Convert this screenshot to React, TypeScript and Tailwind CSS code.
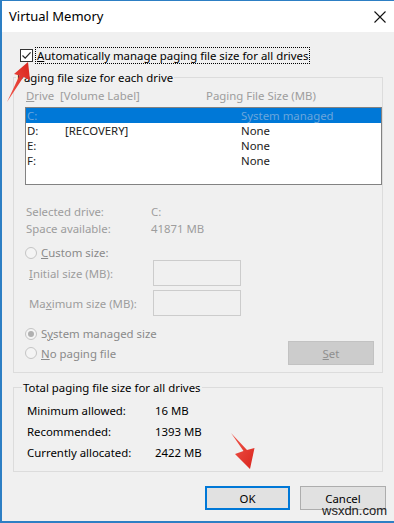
import React from 'react';

const disabled = 'text-[#9d9d9d]';

const Radio: React.FC<{ checked?: boolean }> = ({ checked }) => (
  <span className="w-[12px] h-[12px] rounded-full border border-[#c4c4c4] bg-[#f4f4f4] flex items-center justify-center shrink-0">
    {checked && <span className="w-[6px] h-[6px] rounded-full bg-[#b0b0b0]" />}
  </span>
);

const DisabledBox = () => (
  <div className="w-[88px] h-[26px] border border-[#cccccc] bg-[#f0f0f0]" />
);

const driveRows = [
  { drive: 'C:', label: '', size: 'System managed', selected: true },
  { drive: 'D:', label: '[RECOVERY]', size: 'None' },
  { drive: 'E:', label: '', size: 'None' },
  { drive: 'F:', label: '', size: 'None' },
];

const totals = [
  { label: 'Minimum allowed:', value: '16 MB' },
  { label: 'Recommended:', value: '1393 MB' },
  { label: 'Currently allocated:', value: '2422 MB' },
];

export default function App() {
  return (
    <div className="relative w-[394px] h-[523px] overflow-hidden border-l-2 border-t border-b-2 border-[#2d7fc4] bg-[#f0f0f0] font-['Noto_Sans','Liberation_Sans',sans-serif] text-[11.4px] text-black leading-[15px]">
      {/* title bar */}
      <div className="h-[31px] bg-white flex items-center justify-between pl-[7px] pr-[6px]">
        <span className="text-[13px]">Virtual Memory</span>
        <svg width="14" height="14" viewBox="0 0 14 14" className="mr-[1px]">
          <path d="M1.5 1.5 L12.5 12.5 M12.5 1.5 L1.5 12.5" stroke="#111" strokeWidth="1.1" />
        </svg>
      </div>

      <div className="pl-[11px]">
        {/* auto manage checkbox */}
        <div className="mt-[15px] h-[17px] flex items-center">
          <span className="ml-[7px] w-[13px] h-[13px] border border-[#333] bg-white flex items-center justify-center">
            <svg width="11" height="11" viewBox="0 0 11 11">
              <path d="M1.5 5.5 L4.2 8.2 L9.6 2.4" fill="none" stroke="#222" strokeWidth="1.2" />
            </svg>
          </span>
          <span className="ml-[2px] px-[1px] h-[17px] flex items-center border border-dotted border-black">
            <span><span className="underline">A</span>utomatically manage paging file size for all drives</span>
          </span>
        </div>

        {/* paging file size for each drive */}
        <fieldset className="mt-[6px] w-[370px] border border-[#dcdcdc]">
          <legend className="ml-[2px] px-[1px] leading-[15px]">Paging file size for each drive</legend>
          <div className="pl-[11px]">
            <div className={`mt-[3px] pl-[1px] flex ${disabled}`}>
              <span className="w-[180px]"><span className="underline">D</span>rive&nbsp; [Volume Label]</span>
              <span>Paging File Size (MB)</span>
            </div>
            <div className="mt-[4px] w-[357px] h-[78px] border border-[#828282] bg-white">
              {driveRows.map((r) => (
                <div
                  key={r.drive}
                  className={`h-[15px] leading-[14px] flex items-center pl-[1px] ${r.selected ? 'bg-[#0078d7] text-[#6aa6dc]' : 'text-[#222]'}`}
                >
                  <span className="w-[38px]">{r.drive}</span>
                  <span className="w-[176px]">{r.label}</span>
                  <span>{r.size}</span>
                </div>
              ))}
            </div>

            <div className={`mt-[18px] pl-[1px] ${disabled} leading-[17px]`}>
              <div className="flex">
                <span className="w-[125px]">Selected drive:</span>
                <span>C:</span>
              </div>
              <div className="flex">
                <span className="w-[125px]">Space available:</span>
                <span>41871 MB</span>
              </div>
            </div>

            <div className={`mt-[8px] flex items-center h-[15px] ${disabled}`}>
              <Radio />
              <span className="ml-[4px] text-[#8a8a8a]"><span className="underline">C</span>ustom size:</span>
            </div>
            <div className={`flex items-center ${disabled}`}>
              <span className="ml-[4px] w-[124px]"><span className="underline">I</span>nitial size (MB):</span>
              <DisabledBox />
            </div>
            <div className={`mt-[4px] flex items-center ${disabled}`}>
              <span className="ml-[4px] w-[124px]">Ma<span className="underline">x</span>imum size (MB):</span>
              <DisabledBox />
            </div>

            <div className={`mt-[10px] flex items-center h-[15px] ${disabled}`}>
              <Radio checked />
              <span className="ml-[4px] text-[#8a8a8a]">S<span className="underline">y</span>stem managed size</span>
            </div>
            <div className={`flex items-center h-[24px] ${disabled}`}>
              <Radio />
              <span className="ml-[4px] text-[#8a8a8a]"><span className="underline">N</span>o paging file</span>
              <div className="ml-auto mr-[8px] w-[86px] h-[24px] bg-[#cccccc] border border-[#c2c2c2] flex items-center justify-center text-[#8f8f8f]">
                <span><span className="underline">S</span>et</span>
              </div>
            </div>
            <div className="h-[7px]" />
          </div>
        </fieldset>

        {/* totals */}
        <fieldset className="mt-[7px] w-[370px] border border-[#dcdcdc]">
          <legend className="ml-[8px] px-[1px] leading-[15px]">Total paging file size for all drives</legend>
          <div className="mt-[5px] pl-[13px] pb-[8px] leading-[21px]">
            {totals.map((t) => (
              <div key={t.label} className="flex">
                <span className="w-[128px]">{t.label}</span>
                <span>{t.value}</span>
              </div>
            ))}
          </div>
        </fieldset>

        <div className="mt-[14px] flex">
          <div className="ml-[192px] w-[85px] h-[24px] bg-[#e1e1e1] border-2 border-[#0078d7] flex items-center justify-center">OK</div>
          <div className="ml-[10px] w-[86px] h-[24px] bg-[#e1e1e1] border border-[#adadad] flex items-center justify-center">Cancel</div>
        </div>
      </div>

      {/* red annotation arrows */}
      <svg className="absolute left-0 top-[55px]" width="34" height="50" viewBox="0 55 34 50">
        <defs>
          <linearGradient id="arrA" x1="0" y1="1" x2="1" y2="0">
            <stop offset="0" stopColor="#f25a4f" />
            <stop offset="1" stopColor="#d9241c" />
          </linearGradient>
        </defs>
        <path d="M26 61 L12 73 L17.5 74.5 L5 101 L21.5 76 L28 79 Z" fill="url(#arrA)" />
      </svg>
      <svg className="absolute left-[224px] top-[428px]" width="34" height="44" viewBox="224 428 34 44">
        <defs>
          <linearGradient id="arrB" x1="0" y1="0" x2="1" y2="1">
            <stop offset="0" stopColor="#f25a4f" />
            <stop offset="1" stopColor="#d9241c" />
          </linearGradient>
        </defs>
        <path d="M229 432 L241.5 450 L233 453 L248 468 L252.5 447 L245 449 Z" fill="url(#arrB)" />
      </svg>

      {/* watermark */}
      <span className="absolute left-[320px] top-[502px] font-['Liberation_Sans',sans-serif] text-[13px] leading-[15px] text-[#222]">wsxdn.com</span>
    </div>
  );
}
